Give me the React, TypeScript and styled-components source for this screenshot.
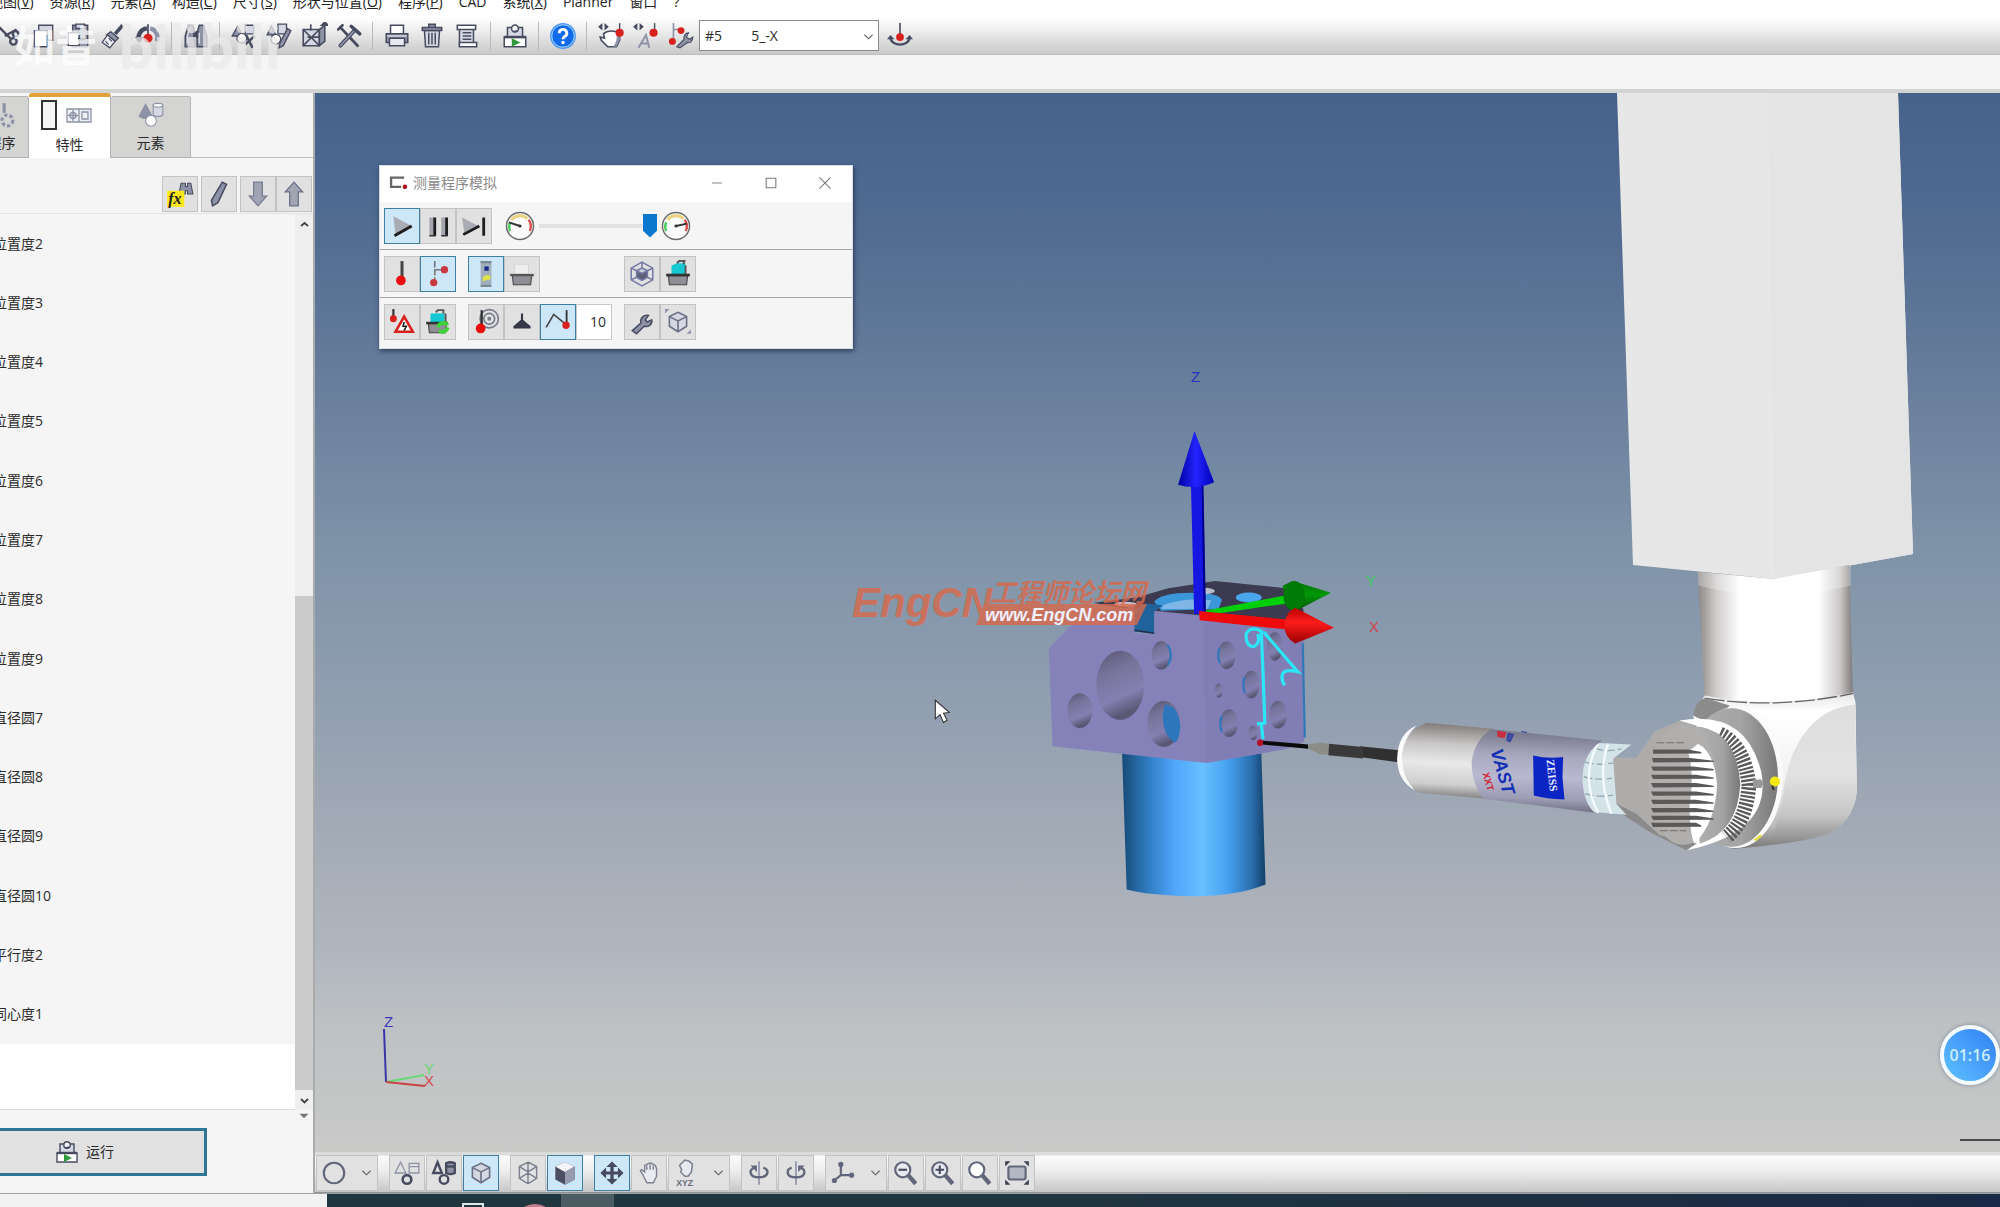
import React from "react";
import styled, { createGlobalStyle, css } from "styled-components";

const INK = "#474b60";
const MID = "#8d92a6";
const LIGHT = "#d5d8e2";
const RED = "#d8201c";

const GlobalStyle = createGlobalStyle`
  * { box-sizing: border-box; }
  body {
    margin: 0;
    overflow: hidden;
    background: #f5f5f5;
    color: #2b2b2b;
    font-family: "Open Sans", "Noto Sans CJK SC", sans-serif;
    font-size: 14px;
    line-height: 20px;
  }
  button, select, input { font: inherit; color: inherit; }
`;

const Page = styled.div`
  display: flex;
  flex-direction: column;
  height: 100vh;
  overflow: hidden;
`;

/* ---------- header ---------- */

const Header = styled.header`
  position: relative;
  flex: none;
  border-bottom: 4px solid #d2d3d3;
`;

const MenuBar = styled.nav`
  display: flex;
  align-items: flex-end;
  gap: 16px;
  height: 17px;
  margin-left: -11px;
  padding-bottom: 5px;
  background: #fff;
`;

const MenuItem = styled.button`
  flex: none;
  padding: 0;
  border: 0;
  background: none;
  white-space: nowrap;
  color: #222;
`;

const ToolBar = styled.div`
  display: flex;
  align-items: center;
  height: 38px;
  margin-left: -10px;
  background: linear-gradient(#fff, #f1f1f1 30%, #c9c9c9);
  border-bottom: 1px solid #bdbdbd;
`;

const ToolButton = styled.button`
  display: flex;
  flex: none;
  align-items: center;
  justify-content: center;
  width: 35px;
  height: 32px;
  padding: 0;
  border: 0;
  background: none;
`;

const Divider = styled.span`
  flex: none;
  width: 1px;
  height: 28px;
  margin: 0 6px;
  background: #b9b9b9;
`;

const SelectBox = styled.label`
  position: relative;
  flex: none;
  width: 180px;
  margin: 0 3px 0 1px;
`;

const ProbeSelect = styled.select`
  width: 100%;
  height: 31px;
  padding: 0 5px;
  appearance: none;
  border: 1px solid #8a8a8a;
  border-radius: 0;
  background: #fff;
`;

const SelectArrow = styled.span`
  position: absolute;
  top: 9px;
  right: 3px;
  display: flex;
  pointer-events: none;
`;

const SubStrip = styled.div`
  height: 34px;
  background: #f5f5f5;
`;

const Watermark = styled.div`
  position: absolute;
  top: 16px;
  left: 13px;
  display: flex;
  align-items: center;
  gap: 22px;
  color: #fff;
  opacity: 0.75;
  font-size: 42px;
  font-weight: 700;
  line-height: 60px;
  pointer-events: none;
`;

const WatermarkBrand = styled.span`
  color: #ebebeb;
  font-family: Lato, sans-serif;
  font-size: 60px;
  font-weight: 900;
`;

/* ---------- side panel ---------- */

const Main = styled.div`
  display: flex;
  flex: 1;
  min-height: 0;
`;

const SidePanel = styled.aside`
  display: flex;
  flex: none;
  flex-direction: column;
  width: 315px;
  overflow: hidden;
  background: #f5f5f5;
  border-right: 2px solid #a9abad;
`;

const Tabs = styled.div`
  display: flex;
  align-items: flex-end;
  height: 65px;
  margin-left: -25px;
  box-shadow: inset 0 -1px #bfbfbf;
`;

const Tab = styled.button<{ $width: number; $active?: boolean }>`
  display: flex;
  flex: none;
  flex-direction: column;
  align-items: center;
  justify-content: space-between;
  width: ${(p) => p.$width}px;
  height: 62px;
  padding: 2px 0 4px;
  border: 1px solid #b4b4b4;
  border-left: 0;
  border-radius: 3px 3px 0 0;
  background: #d4d4d3;
  ${(p) =>
    p.$active &&
    css`
      height: 65px;
      padding-bottom: 3px;
      border-top: 4px solid #e3a13a;
      border-bottom: 0;
      background: #fff;
    `}
`;

const TabIcons = styled.span<{ $start?: boolean }>`
  display: flex;
  align-items: center;
  justify-content: ${(p) => (p.$start ? "flex-start" : "center")};
  gap: 8px;
  width: ${(p) => (p.$start ? "60px" : "auto")};
  height: 32px;
`;

const PanelTools = styled.div`
  display: flex;
  align-items: center;
  justify-content: flex-end;
  gap: 3px;
  height: 56px;
  padding: 16px 1px 0 0;
  border-bottom: 1px solid #e2e2e2;
`;

const Pair = styled.div<{ $spaced?: boolean }>`
  display: flex;
  gap: ${(p) => (p.$spaced ? "1px" : "0")};
`;

const PushButton = styled.button<{ $active?: boolean; $wide?: boolean }>`
  display: flex;
  flex: none;
  align-items: center;
  justify-content: ${(p) => (p.$wide ? "space-between" : "center")};
  width: ${(p) => (p.$wide ? "62px" : "36px")};
  height: 36px;
  padding: ${(p) => (p.$wide ? "0 3px" : "0")};
  border: 1px solid ${(p) => (p.$active ? "#3f7fa6" : "#c3c3c3")};
  background: ${(p) => (p.$active ? "#cde6f8" : "#e1e1e1")};
`;

const ListArea = styled.div`
  display: flex;
  flex: 1;
  min-height: 0;
`;

const ListColumn = styled.div`
  display: flex;
  flex: 1;
  flex-direction: column;
  border-bottom: 1px solid #dcdcdc;
`;

const FeatureList = styled.ul`
  display: flex;
  flex: 1;
  flex-direction: column;
  margin: 0 0 0 -7px;
  padding: 0;
  list-style: none;
`;

const FeatureRow = styled.li`
  display: flex;
  flex: 1;
  align-items: center;
`;

const EmptyRows = styled.div`
  height: 65px;
  background: #fff;
`;

const ScrollTrack = styled.div`
  display: flex;
  flex-direction: column;
  align-items: center;
  width: 18px;
  background: #efefef;
`;

const ScrollButton = styled.button`
  display: flex;
  align-items: center;
  justify-content: center;
  width: 18px;
  height: 20px;
  padding: 0;
  border: 0;
  background: none;
`;

const ScrollGap = styled.div`
  flex: 362;
`;

const ScrollThumb = styled.div`
  flex: 493;
  width: 18px;
  background: #cbcbcb;
`;

const PanelFooter = styled.div`
  display: flex;
  align-items: flex-start;
  justify-content: space-between;
  height: 83px;
  margin-left: -39px;
`;

const RunButton = styled.button`
  display: flex;
  align-items: center;
  justify-content: center;
  gap: 6px;
  width: 246px;
  height: 48px;
  margin-top: 18px;
  border: 3px solid #2f7595;
  background: #e1e1e1;
`;

const MoreArrow = styled.span`
  display: flex;
  width: 18px;
  padding: 0 0 0 3px;
`;

/* ---------- 3D view ---------- */

const ViewColumn = styled.section`
  display: flex;
  flex: 1;
  flex-direction: column;
  min-width: 0;
`;

const Viewport = styled.div`
  position: relative;
  flex: 1;
  overflow: hidden;
  background: linear-gradient(
    #45628b 0%,
    #536d92 14%,
    #6a809d 29%,
    #8094a9 44%,
    #909eb0 57%,
    #a3abb6 70%,
    #b0b6bf 81%,
    #bdc1c3 88%,
    #c9cac8 100%
  );
`;

const SceneSvg = styled.svg`
  position: absolute;
  inset: 0;
  width: 100%;
  height: 100%;
`;

const Timer = styled.div`
  position: absolute;
  right: 0;
  bottom: 67px;
  display: flex;
  align-items: center;
  justify-content: center;
  width: 60px;
  height: 60px;
  border: 4px solid #f4fbff;
  border-radius: 50%;
  background: linear-gradient(225deg, #2d7ff0, #4aa0fa 50%, #5cc2ff);
  box-shadow: 0 0 4px rgba(60, 80, 110, 0.5);
  color: #c9efff;
  font-size: 16px;
  font-weight: 600;
`;

const Dialog = styled.div`
  position: absolute;
  top: 72px;
  left: 64px;
  width: 474px;
  border: 1px solid #d8dde3;
  background: #f5f5f5;
  box-shadow: 1px 2px 5px rgba(20, 35, 60, 0.7);
`;

const TitleBar = styled.div`
  display: flex;
  align-items: center;
  height: 36px;
  padding: 0 0 2px 8px;
  gap: 5px;
  background: #fff;
  color: #8a8a8a;
`;

const DialogTitle = styled.span`
  flex: 1;
`;

const WindowControls = styled.div`
  display: flex;
`;

const WindowButton = styled.button`
  display: flex;
  align-items: center;
  justify-content: center;
  width: 54px;
  height: 34px;
  padding: 0;
  border: 0;
  background: none;
`;

const DialogRow = styled.div<{ $last?: boolean }>`
  display: flex;
  align-items: center;
  gap: 12px;
  height: ${(p) => (p.$last ? "50px" : "48px")};
  padding-left: 4px;
  padding-bottom: ${(p) => (p.$last ? "3px" : "0")};
  border-bottom: ${(p) => (p.$last ? "0" : "1px solid #a8a8a8")};
`;

const Spacer = styled.span`
  width: 60px;
`;

const SpeedControl = styled.label`
  display: flex;
  align-items: center;
  gap: 3px;
`;

const SpeedSlider = styled.input`
  width: 118px;
  height: 24px;
  margin: 0;
  appearance: none;
  background: linear-gradient(#e2e2e2, #e2e2e2) center / 100% 4px no-repeat;
  &::-webkit-slider-thumb {
    appearance: none;
    width: 14px;
    height: 24px;
    background: #0b78d0;
    clip-path: polygon(0 0, 100% 0, 100% 72%, 50% 100%, 0 72%);
  }
`;

const StepInput = styled.input`
  width: 36px;
  height: 36px;
  padding: 0 5px 0 0;
  border: 1px solid #c8c8c8;
  background: #fff;
  text-align: right;
`;

const ViewBar = styled.div`
  display: flex;
  align-items: center;
  gap: 11px;
  height: 41px;
  padding: 2px 0 1px 1px;
  background: linear-gradient(#dadcda 3px, #fbfbfb 4px, #ececec 50%, #c6c6c6);
  border-bottom: 1px solid #8e9496;
`;

const TaskBar = styled.footer`
  display: flex;
  flex: none;
  height: 14px;
  border-top: 1px solid #9aa0a3;
  background: linear-gradient(90deg, #20373f, #20363f 50%, #192a46);
  overflow: hidden;
`;

const TaskSearch = styled.div`
  flex: none;
  width: 327px;
  margin-right: 135px;
  background: #f2f2f2;
`;

const TaskApp = styled.div`
  flex: none;
  width: 53px;
  margin-left: 15px;
  background: #4b5d63;
`;

/* ---------- icons ---------- */

const gauge = (
  <g fill="none">
    <circle cx="12" cy="12" r="11" fill="#fafafa" stroke="#6b6b6b" strokeWidth="1.2" />
    <path d="M4 16a9 9 0 0 1 0-7" stroke="#4bcb62" strokeWidth="2" />
    <path d="M5 7a9 9 0 0 1 13-1" stroke="#ead37c" strokeWidth="2.4" />
    <path d="M19 7a9 9 0 0 1 1 9" stroke="#e05050" strokeWidth="2" />
    <circle cx="12" cy="12" r="1.3" fill="#333" />
  </g>
);

const glass = (fill: string) => (
  <g>
    <path d="M14 14l7 8" stroke="#62667a" strokeWidth="4" />
    <circle cx="9" cy="9" r="7" fill={fill} stroke="#62667a" strokeWidth="2" />
  </g>
);

const paths: Record<string, React.ReactNode> = {
  cut: (
    <g fill="none" stroke={INK} strokeWidth="2.2">
      <path d="M3 3l12 12M20 6L9 12" />
      <circle cx="17" cy="17" r="3" />
      <circle cx="19" cy="10" r="2.5" />
    </g>
  ),
  copy: (
    <g stroke={INK} strokeWidth="1.3">
      <path d="M8 2h13v14H8z" fill={LIGHT} />
      <path d="M4 7h12v15H4z" fill="#fff" />
    </g>
  ),
  paste: (
    <g stroke={INK} strokeWidth="1.3">
      <path d="M7 2h14v20H7z" fill={MID} />
      <path d="M10 1h8v4h-8z" fill={LIGHT} />
      <path d="M3 9h10v12H3z" fill="#fff" />
      <path d="M12 15h7" stroke="#222" strokeWidth="2" />
    </g>
  ),
  brush: (
    <g stroke={INK} strokeWidth="1.2">
      <path d="M21 2l-7 8" strokeWidth="3.4" />
      <path d="M10 8l7 6-3 3-8-6z" fill={MID} />
      <path d="M7 11l7 6-5 6-7-5z" fill="#eceef5" />
      <path d="M5 17l3 3M8 14l3 3" />
    </g>
  ),
  qualify: (
    <g fill="none">
      <path d="M4 17A8.5 8.5 0 0 1 11 5" stroke={INK} strokeWidth="4" />
      <path d="M14 5a8.5 8.5 0 0 1 6 12" stroke={MID} strokeWidth="4" />
      <path d="M12 1v12" stroke={INK} strokeWidth="1.6" />
      <path d="M0 13h8l-4 6z" fill={INK} />
      <circle cx="12" cy="14" r="4.2" fill={RED} />
    </g>
  ),
  binoculars: (
    <g fill={MID} stroke={INK} strokeWidth="1.4">
      <path d="M5 2h4l2 7v13H2V12zM15 2h4l3 10v10h-9V9z" />
      <path d="M10 8h4v5h-4z" fill={INK} />
      <path d="M4 19V12l2-7M15 19V9" stroke={LIGHT} />
    </g>
  ),
  shapesCut: (
    <g stroke={INK} strokeWidth="1.2">
      <path d="M6 3l5 9H1z" fill={MID} />
      <path d="M13 2h8v8h-8z" fill={LIGHT} />
      <circle cx="10" cy="14" r="4.5" fill="#fff" />
      <path d="M14 11l6 12M22 12l-9 8" strokeWidth="2.2" fill="none" />
    </g>
  ),
  shapesEdit: (
    <g stroke={INK} strokeWidth="1.2">
      <path d="M5 3l4 8H1z" fill={MID} />
      <path d="M11 1h8v9h-8z" fill={LIGHT} />
      <circle cx="9" cy="15" r="4.5" fill="#fff" />
      <path d="M20 5l3 2-7 14-4 2 1-5z" fill={MID} />
    </g>
  ),
  frameCut: (
    <g stroke={INK} strokeWidth="1.5" fill="none">
      <path d="M2 6h15v15H2z" fill={LIGHT} />
      <path d="M2 6l15 15M17 6L2 21M9 1v6M6 13h12" />
      <path d="M17 6l5-4v15l-5 4z" fill={MID} />
      <path d="M19 2l3-3 3 3z" fill={INK} />
    </g>
  ),
  tools: (
    <g fill="none" stroke={INK} strokeLinecap="round">
      <path d="M4 4l16 17" strokeWidth="2.6" />
      <path d="M17 7L4 21" strokeWidth="3.6" />
      <path d="M17 7L4 21" stroke={MID} strokeWidth="1.6" />
      <path d="M14 3l8 7" strokeWidth="3.2" />
      <path d="M2 6l4-4" strokeWidth="2.4" />
    </g>
  ),
  printer: (
    <g stroke={INK} strokeWidth="1.4">
      <path d="M6 2h12v8H6z" fill="#fff" />
      <path d="M2 10h20v8H2z" fill={MID} />
      <path d="M5 14h14v7H5z" fill="#e8eaf0" />
      <path d="M3 12h18" stroke={LIGHT} />
    </g>
  ),
  trash: (
    <g stroke={INK} strokeWidth="1.4">
      <path d="M5 7h14l-1 15H6z" fill={LIGHT} />
      <path d="M3 4h18v3H3zM9 1h6v3H9z" fill={MID} />
      <path d="M9 9v11M12 9v11M15 9v11" />
    </g>
  ),
  scroll: (
    <g stroke={INK} strokeWidth="1.4">
      <path d="M5 4h13v17H5z" fill={LIGHT} />
      <path d="M3 2h17v4H3zM5 18h16v4H5z" fill="#fff" />
      <path d="M8 9h8M8 12h8M8 15h8" />
    </g>
  ),
  run: (
    <g stroke={INK} strokeWidth="1.4">
      <path d="M5 4h14v9H5z" fill={LIGHT} />
      <circle cx="12" cy="5" r="3.2" fill="#f2f2f2" />
      <path d="M10 8l5-1" />
      <path d="M2 13h20v9H2z" fill="#fff" />
      <path d="M2 13h20" strokeWidth="2.4" />
      <path d="M9 14l8 4-8 4z" fill="#2f9a3b" stroke="none" />
    </g>
  ),
  help: (
    <g>
      <circle cx="12" cy="12" r="12" fill="#4a9af5" />
      <circle cx="12" cy="12" r="10.4" fill="#0f6bea" stroke="#bcdcff" strokeWidth="0.8" />
      <path d="M8.5 9.5a3.5 3.5 0 1 1 5 3c-1.2.7-1.5 1.2-1.5 2.5" fill="none" stroke="#fff" strokeWidth="2.6" />
      <circle cx="12" cy="18" r="1.6" fill="#fff" />
    </g>
  ),
  handProbe: (
    <g>
      <path d="M0 3.5l4-3.5v7zM10 3.5L6 0v7z" fill={INK} />
      <path d="M20 0v8" stroke={INK} strokeWidth="1.3" />
      <path d="M5 10c3-3 8-3 12-2l3 3v5l-3 6H9l-6-6-1-3 4 1z" fill="#fff" stroke={INK} strokeWidth="1.5" />
      <path d="M17 9l3 3v4l-3 6h-3c3-4 4-8 3-13z" fill={MID} />
      <circle cx="20" cy="9" r="3.8" fill={RED} />
    </g>
  ),
  autoProbe: (
    <g>
      <path d="M0 3.500l4-3.500v7zM10 3.500L6 0v7z" fill={INK} />
      <path d="M20 0v8" stroke={INK} strokeWidth="1.3" />
      <circle cx="19" cy="9" r="3.8" fill={RED} />
      <path d="M5 23l7-12 3 12M8 19h6" fill="none" stroke={MID} strokeWidth="1.8" />
    </g>
  ),
  stylusTool: (
    <g>
      <path d="M5 0v16M5 6h7" stroke={MID} strokeWidth="1.5" />
      <circle cx="12" cy="7" r="3.2" fill={RED} />
      <circle cx="4" cy="17" r="3.2" fill={RED} />
      <path d="M8 22l7-7c-1-3 1-6 4-6l-2 4 3 2 3-2c0 4-3 6-5 5l-7 5z" fill={MID} stroke={INK} strokeWidth="1" />
    </g>
  ),
  anchor: (
    <g fill="none">
      <path d="M12 0v12" stroke={INK} strokeWidth="1.5" />
      <path d="M3 14c2 8 16 8 18 0" stroke={INK} strokeWidth="2.2" />
      <path d="M0 15l3-4 4 4zM17 15l4-4 3 4z" fill={INK} />
      <circle cx="12" cy="13" r="3.6" fill={RED} />
    </g>
  ),
  chevron: <path d="M5 9l7 7 7-7" fill="none" stroke="#666" strokeWidth="2" />,
  chevronUp: <path d="M5 15l7-6 7 6" fill="none" stroke="#444" strokeWidth="3.6" />,
  chevronDown: <path d="M5 9l7 7 7-7" fill="none" stroke="#444" strokeWidth="3.6" />,
  triangle: <path d="M2 7h20l-10 10z" fill="#777" />,
  shapes: (
    <g stroke={MID} strokeWidth="1">
      <path d="M7 2l6 11c-3 3-9 3-12 0z" fill={MID} />
      <path d="M14 3v9c2 2 7 2 9 0V3z" fill={LIGHT} />
      <ellipse cx="18.5" cy="3" rx="4.5" ry="1.8" fill="#fff" />
      <circle cx="12" cy="17.5" r="5" fill="#fff" />
    </g>
  ),
  shapesOutline: (
    <g stroke={MID} strokeWidth="1.2" fill="none">
      <path d="M6 2l5 10H1zM14 3h9v9h-9zM14 6h9" />
      <circle cx="12" cy="18" r="4" stroke={INK} strokeWidth="2.4" />
    </g>
  ),
  shapesBold: (
    <g stroke={INK} strokeWidth="2.2" fill="none">
      <path d="M6 2l4 10H2z" />
      <path d="M14 3q4-2 8 0v9q-4 2-8 0z" fill={MID} />
      <path d="M14 6h8" />
      <circle cx="12" cy="18" r="4" />
    </g>
  ),
  gear: (
    <g stroke={MID} fill="none" strokeWidth="3">
      <path d="M14 1v9" />
      <circle cx="17" cy="17" r="5" strokeDasharray="3 2" />
    </g>
  ),
  tolerance: (
    <g stroke={MID} fill="none" strokeWidth="1.3">
      <path d="M0 6h24v13H0zM12 6v13" fill="#eef0f4" />
      <circle cx="6" cy="12.5" r="3" />
      <path d="M1 12.5h10M6 7v11M15 9h6v7h-6z" />
    </g>
  ),
  formula: (
    <g>
      <path d="M13 2h4v3h2V2h3l2 10h-5V9h-2v3h-6z" fill={MID} stroke={INK} />
      <path d="M0 9h16v15H0z" fill="#ffe81a" />
      <text x="1" y="21" fontFamily="Liberation Serif, serif" fontStyle="italic" fontWeight="700" fontSize="15" fill="#222">fx</text>
    </g>
  ),
  pencil: <path d="M15 1l4 2-8 17-5 3-1-5z" fill={MID} stroke={INK} strokeWidth="1.4" />,
  arrowDown: <path d="M8 1h8v13h4l-8 9-8-9h4z" fill="#a0a4b3" stroke="#777c90" strokeWidth="1.2" />,
  arrowUp: <path d="M8 23h8V10h4L12 1 4 10h4z" fill="#a0a4b3" stroke="#6b7086" strokeWidth="1.2" />,
  app: (
    <g fill="none">
      <path d="M20 5H3v12h13" stroke="#666" strokeWidth="3" />
      <circle cx="21" cy="17" r="3" fill="#b0121c" />
    </g>
  ),
  minimize: <path d="M5 12h14" stroke="#888" strokeWidth="1.5" />,
  maximize: <path d="M5 5h14v14H5z" fill="none" stroke="#777" strokeWidth="1.5" />,
  close: <path d="M4 4l16 16M20 4L4 20" stroke="#777" strokeWidth="1.5" />,
  play: (
    <g>
      <path d="M4 3l17 9-15 8z" fill="#a9acb4" />
      <path d="M21 12L5 21" stroke="#1e1e1e" strokeWidth="2.8" />
    </g>
  ),
  pause: (
    <g>
      <path d="M4 4h5v17H4zM15 4h5v17h-5z" fill="#a3a6ae" />
      <path d="M9 4v17M20 4v17" stroke="#1e1e1e" strokeWidth="2.6" />
      <path d="M4 21h6M15 21h6" stroke="#333" strokeWidth="1.4" />
    </g>
  ),
  skip: (
    <g>
      <path d="M1 4l15 8-13 7z" fill="#a9acb4" />
      <path d="M17 12L2 20M21 4v17" stroke="#1e1e1e" strokeWidth="2.6" />
    </g>
  ),
  gaugeLow: (
    <g>
      {gauge}
      <path d="M12 12L3 9" stroke="#333" strokeWidth="1.5" />
    </g>
  ),
  gaugeHigh: (
    <g>
      {gauge}
      <path d="M12 12l9-2" stroke="#333" strokeWidth="1.5" />
    </g>
  ),
  probe: (
    <g>
      <path d="M12 0v15" stroke="#444" strokeWidth="2.8" />
      <circle cx="11" cy="18" r="4.5" fill="#e80c0c" />
    </g>
  ),
  probePath: (
    <g>
      <path d="M9 0v17M9 8h8" stroke="#777" strokeWidth="1.5" strokeDasharray="6 1.500" />
      <circle cx="18" cy="8" r="3.4" fill="#c8393f" />
      <circle cx="8" cy="20" r="3.4" fill="#c8393f" />
    </g>
  ),
  machine: (
    <g>
      <path d="M7 0h10v24H7z" fill="#9fb0bc" />
      <path d="M7 1h10M7 23h10" stroke="#7b8994" strokeWidth="2" />
      <path d="M10.500 5h4v4h-4z" fill="#182a86" />
      <path d="M9 15c3-3 5-1 7-2v4c-3 1-4 0-7 2z" fill="#dfe04a" />
    </g>
  ),
  fixtureOff: (
    <g>
      <path d="M5 3h13v9H5z" fill="#eee" stroke="#d6d6d6" />
      <path d="M3 13h18l-1 9H4z" fill="#8e9096" stroke="#444" />
      <path d="M1 13h22" stroke="#555" strokeWidth="2.2" />
    </g>
  ),
  fixture: (
    <g>
      <path d="M6 4l5-2h8v10H6z" fill="#15c9d2" />
      <path d="M11 2l2-2h5l-1 3M19 4v9" stroke="#555" strokeWidth="1.8" fill="none" />
      <path d="M3 13h18l-1 9H4z" fill="#8e9096" stroke="#444" />
      <path d="M1 13h22" stroke="#333" strokeWidth="2.6" />
    </g>
  ),
  fixtureSync: (
    <g>
      <path d="M5 4h13v9H5z" fill="#15c9d2" />
      <path d="M10 3l2-2h5v3M19 4v8" stroke="#555" strokeWidth="1.8" fill="none" />
      <path d="M3 13h17l-1 9H4z" fill="#8e9096" stroke="#444" />
      <path d="M1 13h20" stroke="#333" strokeWidth="2.4" />
      <path d="M12 17a5 5 0 0 1 9-2M21 17a5 5 0 0 1-8 3" fill="none" stroke="#3fd435" strokeWidth="3.4" />
    </g>
  ),
  cubeFrame: (
    <g fill="none" stroke="#7478a4" strokeWidth="1.4">
      <path d="M12 1l10 5.500v11L12 23 2 17.500v-11zM12 1v5M2 6.500L7 9M22 6.500L17 9M2 17.500L7 15M22 17.500L17 15" />
      <path d="M12 6.500l5 2.500v6l-5 3-5-3V9z" fill="#5d6077" />
      <path d="M7 9l5 2.500L17 9l-5-2.500z" fill="#cdd0dd" />
    </g>
  ),
  collision: (
    <g>
      <path d="M4 0v8" stroke="#333" strokeWidth="2" />
      <circle cx="4" cy="9" r="3.2" fill={RED} />
      <path d="M14 7l8 14H6z" fill="#fff" stroke="#d8201c" strokeWidth="2.4" />
      <path d="M14 12l-1 4h3l-2 4" fill="none" stroke="#222" strokeWidth="1.5" />
    </g>
  ),
  target: (
    <g fill="none">
      <circle cx="15" cy="9" r="8.5" stroke="#777c8c" strokeWidth="1.5" />
      <circle cx="15" cy="9" r="5" stroke="#777c8c" strokeWidth="1.5" />
      <circle cx="15" cy="9" r="1.8" fill="#777c8c" />
      <path d="M8 1v16" stroke="#333" strokeWidth="2.2" />
      <circle cx="7" cy="18" r="4.5" fill="#e80c0c" />
    </g>
  ),
  cone: <path d="M11 4h2v6l7 6v2H4v-2l7-6z" fill="#343847" />,
  polyline: (
    <g fill="none">
      <path d="M1 17L8 5l11 9" stroke="#444" strokeWidth="1.5" />
      <path d="M20 1v14" stroke="#333" strokeWidth="1.7" />
      <circle cx="19.5" cy="15" r="3.4" fill={RED} />
    </g>
  ),
  wrench: (
    <path d="M3 20l8-7c-1-5 3-8 7-7l-3 4 2 2 4-2c1 4-3 7-7 6l-7 7z" fill={MID} stroke={INK} strokeWidth="1.4" />
  ),
  cube: (
    <g stroke="#6b7086" strokeWidth="1.5">
      <path d="M12 3l8 4v9l-8 5-8-5V7z" fill={LIGHT} />
      <path d="M4 7l8 4 8-4M12 11v10" fill="none" />
    </g>
  ),
  cubeCorners: (
    <g stroke="#6b7086" strokeWidth="1.5">
      <path d="M12 3l8 4v9l-8 5-8-5V7z" fill={LIGHT} />
      <path d="M4 7l8 4 8-4M12 11v10" fill="none" />
      <path d="M0 4V0h4zM24 19v4h-4z" fill={MID} stroke="none" />
    </g>
  ),
  cubeWire: (
    <g stroke="#7b7f8e" strokeWidth="1.3" fill="none">
      <path d="M12 2l8 4v11l-8 5-8-5V6zM4 6l8 5 8-5M12 2v20M4 17l8-5 8 5" />
    </g>
  ),
  cubeSolid: (
    <g>
      <path d="M12 2l9 4v12l-9 5-9-5V6z" fill="#4b4f61" />
      <path d="M3 6l9-4 9 4-9 5z" fill="#f5f5fa" />
      <path d="M12 11l9-5v12l-9 5z" fill="#979bb0" />
    </g>
  ),
  circle: <circle cx="12" cy="12" r="9.5" fill="none" stroke="#62667a" strokeWidth="2" />,
  move: (
    <path
      d="M12 2l4 4h-3v5h5V8l4 4-4 4v-3h-5v5h3l-4 4-4-4h3v-5H6v3l-4-4 4-4v3h5V6H8z"
      fill={INK}
      stroke={INK}
      strokeWidth="1"
    />
  ),
  hand: (
    <g fill="none" stroke="#7b7f90" strokeWidth="1.3">
      <path d="M6 13l-2-3 1-1 3 2V5l2-1 2-1 2 0 2 1 2 1 1 3v7l-3 6h-6l-3-6z" fill="#e9eaf0" />
      <path d="M10 5v4M13 4v5M16 5v4" />
    </g>
  ),
  handXyz: (
    <g>
      <path d="M8 9l-2-4 2-2 3-3 4 1 3 3-1 7-3 4h-3l-4-4z" fill="#e9eaf0" stroke="#7b7f90" strokeWidth="1.4" />
      <text x="3" y="24" fontFamily="Liberation Sans, sans-serif" fontWeight="700" fontSize="8" fill="#666b7c">XYZ</text>
    </g>
  ),
  rotateL: (
    <g fill="none" stroke="#62667a">
      <path d="M12 1v22" stroke="#8d92a6" strokeWidth="1.5" />
      <path d="M8 7c-6 2-5 9 4 9 9 0 10-7 4-9" strokeWidth="2.3" />
      <path d="M4 5h6v6z" fill="#62667a" stroke="none" />
    </g>
  ),
  rotateR: (
    <g fill="none" stroke="#62667a">
      <path d="M12 1v22" stroke="#8d92a6" strokeWidth="1.5" />
      <path d="M8 7c-6 2-5 9 4 9 9 0 10-7 4-9" strokeWidth="2.3" />
      <path d="M20 5h-6v6z" fill="#62667a" stroke="none" />
    </g>
  ),
  axes: (
    <g stroke="#62667a" strokeWidth="2" fill="#62667a">
      <path d="M10 4v10h10M10 14l-6 5" fill="none" />
      <circle cx="10" cy="4" r="1.4" />
      <circle cx="20" cy="14" r="1.4" />
      <circle cx="4" cy="19" r="1.4" />
    </g>
  ),
  zoomOut: (
    <g>
      {glass("#e8eaf0")}
      <path d="M5 9h8" stroke={INK} strokeWidth="2" />
    </g>
  ),
  zoomIn: (
    <g>
      {glass("#e8eaf0")}
      <path d="M5 9h8M9 5v8" stroke={INK} strokeWidth="2" />
    </g>
  ),
  zoom: glass("#fff"),
  fit: (
    <g>
      <path d="M1 6V1h5zM18 1h5v5zM1 18v5h5zM23 18v5h-5z" fill="#3d4152" />
      <rect x="4" y="6" width="16" height="12" rx="2" fill="#b3b7c4" stroke="#62667a" strokeWidth="2" />
    </g>
  ),
};

const Icon = ({ name, size = 26 }: { name: string; size?: number }) => (
  <svg width={size} height={size} viewBox="-1 -1 26 26" aria-hidden="true">
    {paths[name]}
  </svg>
);

/* ---------- scene ---------- */

const holes: [number, number, number, number][] = [
  [785, 914, 67, 97],
  [672, 985, 35, 49],
  [900, 830, 27, 40],
  [1083, 830, 25, 39],
  [1218, 805, 22, 40],
  [1152, 912, 23, 39],
  [1090, 1020, 25, 39],
  [1227, 996, 25, 39],
  [1061, 929, 11, 20],
  [1157, 1048, 13, 20],
];

const fins = [632, 658, 683, 708, 733, 758, 783, 808, 831, 852];

const Scene = () => (
  <SceneSvg viewBox="315 94 1685 1059" preserveAspectRatio="xMidYMid slice" role="img" aria-label="三维视图">
    <defs>
      <linearGradient id="post">
        <stop offset="0" stopColor="#174a78" />
        <stop offset="0.18" stopColor="#2f7cc0" />
        <stop offset="0.36" stopColor="#4fa4fa" />
        <stop offset="0.56" stopColor="#68c0ff" />
        <stop offset="0.74" stopColor="#46a0ee" />
        <stop offset="0.9" stopColor="#2b70b0" />
        <stop offset="1" stopColor="#133f68" />
      </linearGradient>
      <linearGradient id="hole" x1="0" y1="0" x2="0.3" y2="1">
        <stop offset="0" stopColor="#56536f" />
        <stop offset="0.35" stopColor="#76739a" />
        <stop offset="0.75" stopColor="#8380b2" />
        <stop offset="1" stopColor="#5a5775" />
      </linearGradient>
      <linearGradient id="neck">
        <stop offset="0" stopColor="#8c8785" />
        <stop offset="0.12" stopColor="#cfcccb" />
        <stop offset="0.27" stopColor="#ffffff" />
        <stop offset="0.78" stopColor="#ffffff" />
        <stop offset="0.92" stopColor="#c9c7c6" />
        <stop offset="1" stopColor="#7d7a79" />
      </linearGradient>
      <linearGradient id="elbow" x1="0" y1="0" x2="0" y2="1">
        <stop offset="0" stopColor="#e4e4e4" />
        <stop offset="0.12" stopColor="#ffffff" />
        <stop offset="0.55" stopColor="#f2f2f2" />
        <stop offset="0.85" stopColor="#bcbcbc" />
        <stop offset="1" stopColor="#777777" />
      </linearGradient>
      <linearGradient id="side" x1="0" y1="0" x2="0" y2="1">
        <stop offset="0" stopColor="#dedede" />
        <stop offset="0.5" stopColor="#e2e2e2" />
        <stop offset="0.8" stopColor="#c6c6c6" />
        <stop offset="1" stopColor="#8c8c8c" />
      </linearGradient>
      <linearGradient id="body" x1="0.06" y1="0" x2="0" y2="1">
        <stop offset="0" stopColor="#86817e" />
        <stop offset="0.25" stopColor="#c8c6c6" />
        <stop offset="0.5" stopColor="#e9e9e9" />
        <stop offset="0.78" stopColor="#cecece" />
        <stop offset="1" stopColor="#6f6c6b" />
      </linearGradient>
      <linearGradient id="sleeve" x1="0.06" y1="0" x2="0" y2="1">
        <stop offset="0" stopColor="#77778a" />
        <stop offset="0.3" stopColor="#a8a8bf" />
        <stop offset="0.55" stopColor="#b8b8d0" />
        <stop offset="0.8" stopColor="#9d9db5" />
        <stop offset="1" stopColor="#626274" />
      </linearGradient>
      <linearGradient id="drum">
        <stop offset="0" stopColor="#b1b1b1" />
        <stop offset="0.6" stopColor="#a4a4a4" />
        <stop offset="1" stopColor="#787878" />
      </linearGradient>
      <linearGradient id="blueCone">
        <stop offset="0" stopColor="#0000a0" />
        <stop offset="0.5" stopColor="#2424ff" />
        <stop offset="1" stopColor="#0000b8" />
      </linearGradient>
      <linearGradient id="redCone" x1="0" y1="0" x2="0" y2="1">
        <stop offset="0" stopColor="#b50000" />
        <stop offset="0.4" stopColor="#ff1c1c" />
        <stop offset="1" stopColor="#990000" />
      </linearGradient>
      <linearGradient id="greenCone" x1="0" y1="0" x2="0" y2="1">
        <stop offset="0" stopColor="#006a00" />
        <stop offset="0.45" stopColor="#009a08" />
        <stop offset="1" stopColor="#005200" />
      </linearGradient>
    </defs>

    {/* ram */}
    <path d="M1617 94H1898L1913 555 1775 580 1633 566z" fill="#e7e7e7" />
    <path d="M1768 94H1898L1913 555 1775 580z" fill="#e4e4e4" />

    {/* wrist and probe head */}
    <g transform="translate(1360 540) scale(0.333)">
      <path d="M1014 98L1243 120 1470 78 1480 470Q1250 515 1035 480z" fill="url(#neck)" />
      <path d="M1016 140Q1240 200 1474 140V78L1243 120 1014 98z" fill="#ffffff" opacity="0.25" />
      <path d="M1035 470Q1250 512 1480 460L1488 490 1492 760Q1480 855 1400 888 1300 918 1120 930L1000 530z" fill="url(#elbow)" />
      <path d="M1035 478Q1250 512 1480 464" fill="none" stroke="#666" strokeWidth="4" strokeDasharray="60 8" />
      <path d="M1487 497Q1390 505 1330 590 1275 670 1270 790L1235 912Q1300 905 1400 885 1480 855 1492 760z" fill="url(#side)" />
      <path d="M1000 530Q1010 480 1040 478L1110 500 1060 560z" fill="#8b8b8b" />
      <ellipse cx="1128" cy="716" rx="142" ry="212" fill="#fafafa" />
      <ellipse cx="1115" cy="716" rx="140" ry="208" fill="url(#drum)" />
      <path d="M960 545Q1160 510 1205 700 1240 880 980 935L1000 900 1140 740z" fill="#ffffff" />
      <path d="M1080 585Q1155 620 1168 740 1160 850 1100 895" fill="none" stroke="#5a5a5a" strokeWidth="44" strokeDasharray="7 5" />
      <path d="M1005 562Q1130 570 1142 735 1135 880 1020 915z" fill="url(#drum)" />
      <path d="M755 655L830 658 885 577 960 545 1010 560V915L980 935 870 880 790 828 760 790z" fill="#adacab" />
      <path d="M760 790L790 828 870 880 980 935 1010 915 900 890 830 825z" fill="#8a8a8a" />
      <ellipse cx="970" cy="738" rx="104" ry="180" fill="#b0afae" />
      <path d="M1015 615Q1065 640 1072 738 1068 850 1005 915 990 890 990 800 1005 700 985 640z" fill="#fff" />
      {fins.map((y, i) => (
        <path
          key={y}
          d={`M${880 - Math.min(i, 2) * 3} ${y}L${985 + Math.min(i, 3) * 8} ${y}L${i > 0 && i < 9 ? 1062 : 1025} ${y + 8}V${y + 12}L880 ${y + 13}z`}
          fill="#5a5958"
        />
      ))}
      <path d="M890 612h90M900 876h80" stroke="#6e6d6c" strokeWidth="3" strokeDasharray="24 6" />
      <path d="M1180 722h25q10 12 0 26h-25z" fill="#999" />
      <circle cx="1246" cy="728" r="15" fill="#f2ea10" />
      <path d="M1238 740l4 14" stroke="#333" strokeWidth="6" />
      <path d="M1185 905l20-15" stroke="#e4dc30" strokeWidth="7" />

      <path d="M700 612L815 617 760 660 770 795 800 828 700 820Q660 790 668 700 672 640 700 612z" fill="#d3e3e8" />
      <path d="M705 628q35 14 80 2M676 670q40 12 84 2M672 714q40 12 84 4M676 765q40 12 84 4" fill="none" stroke="#92a7ad" strokeWidth="4" strokeDasharray="26 9" />
      <path d="M745 615Q710 715 755 825M715 612Q660 715 715 822" fill="none" stroke="#f5fbfd" strokeWidth="7" />
      <path d="M0 622L125 635V672L0 655z" fill="#303030" />
      <path d="M200 552L400 570 380 780 180 762Q112 730 112 660 120 585 200 552z" fill="url(#body)" />
      <path d="M170 560Q112 585 112 660 112 725 165 755 125 715 126 655 128 600 170 560z" fill="#fbfbfb" />
      <path d="M395 571L728 605Q672 640 668 710 668 790 705 822L370 780Q335 735 335 670 345 600 395 571z" fill="url(#sleeve)" />
      <path d="M520 650Q560 660 610 655L608 715 614 782Q560 780 522 770z" fill="#0b24c4" />
      <text transform="translate(560 663) rotate(84)" fontFamily="Liberation Serif, serif" fontWeight="700" fontSize="34" fill="#e4e8ff">ZEISS</text>
      <text transform="translate(392 636) rotate(74)" fontFamily="Liberation Sans, sans-serif" fontWeight="700" fontStyle="italic" fontSize="54" fill="#1230b4">VAST</text>
      <text transform="translate(368 704) rotate(74)" fontFamily="Liberation Sans, sans-serif" fontWeight="700" fontSize="29" fill="#d6202c">XXT</text>
      <path d="M412 576l28 4-6 18-22-4z" fill="#c83040" />
      <path d="M445 584l16 3-10 22-10-4zM485 578l16 3" fill="#4450a4" stroke="#26389c" strokeWidth="3" />
    </g>

    {/* workpiece */}
    <g transform="translate(840 360) scale(0.357)">
      <path d="M790 1100L1180 1095 1192 1472Q1110 1505 990 1505 860 1502 803 1486z" fill="url(#post)" />
      <path d="M710 683L830 668 920 642 1050 622 1250 642 1298 700V790L1005 725 880 715z" fill="#3b3a50" />
      <path d="M880 680Q900 655 985 655 1060 655 1070 675L1060 700 900 705z" fill="#3c96da" />
      <path d="M905 690Q960 668 1040 676L1030 700H900z" fill="#7eb6e8" />
      <ellipse cx="1145" cy="668" rx="36" ry="14" fill="#4aa6ec" />
      <ellipse cx="1020" cy="650" rx="30" ry="9" fill="#b7bccb" />
      <ellipse cx="800" cy="687" rx="32" ry="7" fill="#c8bcc8" />
      <path d="M585 810L645 748 825 690V768L880 768V705L1005 718 1300 758V1072L1250 1092 1025 1132 595 1085z" fill="#8582ba" />
      <path d="M880 705L1005 718 1300 758V1072L1250 1092 1025 1132 1018 720z" fill="#817eb6" />
      <path d="M825 700L855 685 905 690 880 707V768L825 764z" fill="#20639c" />
      <path d="M825 760L880 768" stroke="#203048" strokeWidth="4" />
      <path d="M1296 796L1302 1060" stroke="#2f78b8" strokeWidth="6" />
      {holes.map(([cx, cy, rx, ry]) => (
        <ellipse key={`${cx}-${cy}`} cx={cx} cy={cy} rx={rx} ry={ry} fill="url(#hole)" />
      ))}
      <ellipse cx="907" cy="1022" rx="46" ry="65" fill="url(#hole)" />
      <path d="M910 968Q950 970 953 1030 950 1070 938 1075 900 1050 905 990z" fill="#2e76bc" />
      <path d="M917 800Q936 828 918 858M1064 808Q1054 830 1064 852M1134 890Q1126 912 1134 936M1070 1000Q1060 1020 1070 1044" fill="none" stroke="#2e76bc" strokeWidth="6" />

      <path d="M1005 708L1270 658V682L1010 720z" fill="#02cf0a" />
      <path d="M1240 635L1268 622 1375 655 1278 705 1255 700z" fill="url(#greenCone)" />
      <ellipse cx="1272" cy="663" rx="30" ry="41" fill="#007a06" />
      <path d="M983 350H1017L1024 712 992 715z" fill="#1616e2" />
      <path d="M1013 350H1018L1025 712H1018z" fill="#00008a" />
      <path d="M993 202L1048 345Q998 368 947 352z" fill="url(#blueCone)" />
      <path d="M1005 706L1255 730V758L1008 732z" fill="#ee0a0a" />
      <path d="M1275 697L1384 753 1275 797Q1245 780 1244 745 1248 710 1275 697z" fill="url(#redCone)" />

      <path d="M1185 765Q1150 745 1138 770 1135 805 1160 806 1178 795 1170 770M1180 765L1185 880 1190 1020 1168 1022M1180 1022L1185 1065M1187 765L1282 876Q1240 865 1238 890 1238 905 1246 914" fill="none" stroke="#2be6f6" strokeWidth="9" />
      <circle cx="1177" cy="1075" r="9" fill="#b3102a" />
      <path d="M1185 1069L1312 1080V1092L1185 1080z" fill="#0a0a0a" />
      <path d="M1310 1080L1350 1074 1375 1080V1108L1345 1108 1312 1092z" fill="#8d8d88" />
      <path d="M1370 1078L1465 1087V1119L1368 1110z" fill="#3a3a3a" />
      <path d="M267 956V1008L280 996 290 1018 300 1012 290 992 306 990z" fill="#fff" stroke="#333" strokeWidth="3" />
    </g>

    {/* axis labels */}
    <g fontFamily="Liberation Sans, sans-serif" fontSize="15">
      <text x="1191" y="383" fill="#2330c0">Z</text>
      <text x="1366" y="587" fill="#3ecb5c">Y</text>
      <text x="1369" y="633" fill="#d2434c">X</text>
      <text x="384" y="1028" fill="#3a36bc">Z</text>
      <text x="424" y="1075" fill="#66d878">Y</text>
      <text x="424" y="1087" fill="#d24c4c">X</text>
    </g>
    <path d="M384 1030L386 1083" stroke="#3a36a8" strokeWidth="2" />
    <path d="M386 1083L424 1076" stroke="#66d878" strokeWidth="2" />
    <path d="M386 1083L425 1087" stroke="#c84444" strokeWidth="2" />
    <path d="M1960 1141H2000" stroke="#4a4a4a" strokeWidth="2" />

    {/* forum logo */}
    <g fill="#d9694a" opacity="0.8" fontWeight="700" fontStyle="italic">
      <path d="M984 605H1147L1137 626H976z" />
      <text x="852" y="618" fontFamily="'Liberation Sans Narrow', 'Liberation Sans', sans-serif" fontSize="50" fontWeight="700">
        <tspan fontSize="42">EngCN</tspan>
      </text>
      <text x="990" y="603" fontFamily="Noto Sans CJK SC, sans-serif" fontSize="26">工程师论坛网</text>
    </g>
    <text x="985" y="622" fontFamily="Liberation Sans, sans-serif" fontWeight="700" fontStyle="italic" fontSize="18" fill="#eef0ff">
      www.EngCN.com
    </text>
  </SceneSvg>
);

/* ---------- data ---------- */

const menus: [string, string?][] = [
  ["视图", "V"],
  ["资源", "R"],
  ["元素", "A"],
  ["构造", "C"],
  ["尺寸", "S"],
  ["形状与位置", "O"],
  ["程序", "P"],
  ["CAD"],
  ["系统", "X"],
  ["Planner"],
  ["窗口"],
  ["?"],
];

const toolGroups: [string, string][][] = [
  [["cut", "剪切"], ["copy", "复制"], ["paste", "粘贴"], ["brush", "格式刷"], ["qualify", "校准"]],
  [["binoculars", "查找"]],
  [["shapesCut", "剪切元素"], ["shapesEdit", "编辑元素"], ["frameCut", "删除特性"], ["tools", "工具"]],
  [["printer", "打印"], ["trash", "删除"], ["scroll", "报告"]],
  [["run", "运行程序"]],
  [["help", "帮助"]],
  [["handProbe", "手动测头"], ["autoProbe", "自动测头"], ["stylusTool", "探针设置"]],
];

const features = [
  "位置度2", "位置度3", "位置度4", "位置度5", "位置度6", "位置度7", "位置度8", "位置度9",
  "直径圆7", "直径圆8", "直径圆9", "直径圆10", "平行度2", "同心度1",
];

type BarButton = { icon: string; label: string; active?: boolean; wide?: boolean };

const viewGroups: BarButton[][] = [
  [{ icon: "circle", label: "圆", wide: true }],
  [
    { icon: "shapesOutline", label: "隐藏元素" },
    { icon: "shapesBold", label: "显示元素" },
    { icon: "cube", label: "模型", active: true },
  ],
  [
    { icon: "cubeWire", label: "线框" },
    { icon: "cubeSolid", label: "实体", active: true },
  ],
  [
    { icon: "move", label: "移动", active: true },
    { icon: "hand", label: "平移" },
    { icon: "handXyz", label: "旋转", wide: true },
  ],
  [
    { icon: "rotateL", label: "向左旋转" },
    { icon: "rotateR", label: "向右旋转" },
  ],
  [
    { icon: "axes", label: "视图方向", wide: true },
    { icon: "zoomOut", label: "缩小" },
    { icon: "zoomIn", label: "放大" },
    { icon: "zoom", label: "缩放窗口" },
    { icon: "fit", label: "适合窗口" },
  ],
];

const IconButton = ({ icon, label, active, wide }: BarButton) => (
  <PushButton aria-label={label} $active={active} $wide={wide}>
    <Icon name={icon} size={28} />
    {wide && <Icon name="chevron" size={15} />}
  </PushButton>
);

const SimulationDialog = () => (
  <Dialog role="dialog" aria-label="测量程序模拟">
    <TitleBar>
      <Icon name="app" size={20} />
      <DialogTitle>测量程序模拟</DialogTitle>
      <WindowControls>
        <WindowButton aria-label="最小化"><Icon name="minimize" size={18} /></WindowButton>
        <WindowButton aria-label="最大化"><Icon name="maximize" size={18} /></WindowButton>
        <WindowButton aria-label="关闭"><Icon name="close" size={18} /></WindowButton>
      </WindowControls>
    </TitleBar>
    <DialogRow>
      <Pair>
        <IconButton icon="play" label="播放" active />
        <IconButton icon="pause" label="暂停" />
        <IconButton icon="skip" label="单步" />
      </Pair>
      <SpeedControl>
        <Icon name="gaugeLow" size={32} />
        <SpeedSlider type="range" min={0} max={100} defaultValue={100} aria-label="速度" />
        <Icon name="gaugeHigh" size={32} />
      </SpeedControl>
    </DialogRow>
    <DialogRow>
      <Pair>
        <IconButton icon="probe" label="测头" />
        <IconButton icon="probePath" label="路径" active />
      </Pair>
      <Pair>
        <IconButton icon="machine" label="机器" active />
        <IconButton icon="fixtureOff" label="夹具" />
      </Pair>
      <Spacer />
      <Pair>
        <IconButton icon="cubeFrame" label="安全平面" />
        <IconButton icon="fixture" label="工件" />
      </Pair>
    </DialogRow>
    <DialogRow $last>
      <Pair>
        <IconButton icon="collision" label="碰撞检测" />
        <IconButton icon="fixtureSync" label="更新夹具" />
      </Pair>
      <Pair>
        <IconButton icon="target" label="测点" />
        <IconButton icon="cone" label="法向" />
        <IconButton icon="polyline" label="轨迹" active />
        <StepInput defaultValue="10" aria-label="步数" />
      </Pair>
      <Pair>
        <IconButton icon="wrench" label="设置" />
        <IconButton icon="cubeCorners" label="视图范围" />
      </Pair>
    </DialogRow>
  </Dialog>
);

export default function App() {
  return (
    <Page>
      <GlobalStyle />
      <Header>
        <MenuBar>
          {menus.map(([label, key]) => (
            <MenuItem key={label}>
              {label}
              {key && <>(<u>{key}</u>)</>}
            </MenuItem>
          ))}
        </MenuBar>
        <ToolBar>
          {toolGroups.map((group, i) => (
            <React.Fragment key={group[0][0]}>
              {i > 0 && <Divider />}
              {group.map(([icon, label]) => (
                <ToolButton key={icon} aria-label={label}>
                  <Icon name={icon} size={28} />
                </ToolButton>
              ))}
            </React.Fragment>
          ))}
          <SelectBox>
            <ProbeSelect aria-label="探针" defaultValue="5">
              <option value="5">{"#5" + "\u00a0".repeat(8) + "5_-X"}</option>
            </ProbeSelect>
            <SelectArrow><Icon name="chevron" size={15} /></SelectArrow>
          </SelectBox>
          <ToolButton aria-label="测头方向"><Icon name="anchor" size={28} /></ToolButton>
        </ToolBar>
        <SubStrip />
        <Watermark>
          <span>如昔</span>
          <WatermarkBrand>bilibili</WatermarkBrand>
        </Watermark>
      </Header>

      <Main>
        <SidePanel>
          <Tabs role="tablist">
            <Tab role="tab" $width={54}>
              <TabIcons><Icon name="gear" size={28} /></TabIcons>
              程序
            </Tab>
            <Tab role="tab" aria-selected $width={82} $active>
              <TabIcons $start>
                <svg width="18" height="32" aria-hidden="true">
                  <path d="M2 2h14v28H2z" fill="#f5f5f5" stroke="#333" strokeWidth="2" />
                </svg>
                <Icon name="tolerance" size={26} />
              </TabIcons>
              特性
            </Tab>
            <Tab role="tab" $width={80}>
              <TabIcons><Icon name="shapes" size={28} /></TabIcons>
              元素
            </Tab>
          </Tabs>
          <PanelTools>
            <IconButton icon="formula" label="公式查找" />
            <IconButton icon="pencil" label="编辑" />
            <Pair>
              <IconButton icon="arrowDown" label="下移" />
              <IconButton icon="arrowUp" label="上移" />
            </Pair>
          </PanelTools>
          <ListArea>
            <ListColumn>
              <FeatureList>
                {features.map((name) => (
                  <FeatureRow key={name}>{name}</FeatureRow>
                ))}
              </FeatureList>
              <EmptyRows />
            </ListColumn>
            <ScrollTrack>
              <ScrollButton aria-label="向上滚动"><Icon name="chevronUp" size={13} /></ScrollButton>
              <ScrollGap />
              <ScrollThumb />
              <ScrollButton aria-label="向下滚动"><Icon name="chevronDown" size={13} /></ScrollButton>
            </ScrollTrack>
          </ListArea>
          <PanelFooter>
            <RunButton>
              <Icon name="run" size={26} />
              运行
            </RunButton>
            <MoreArrow><Icon name="triangle" size={12} /></MoreArrow>
          </PanelFooter>
        </SidePanel>

        <ViewColumn>
          <Viewport>
            <Scene />
            <SimulationDialog />
            <Timer>01:16</Timer>
          </Viewport>
          <ViewBar>
            {viewGroups.map((group) => (
              <Pair key={group[0].icon} $spaced>
                {group.map((b) => (
                  <IconButton key={b.icon} {...b} />
                ))}
              </Pair>
            ))}
          </ViewBar>
        </ViewColumn>
      </Main>

      <TaskBar>
        <TaskSearch />
        <svg width="84" height="13" aria-hidden="true">
          <path d="M1 13V10H21V13" fill="none" stroke="#dfe6e8" strokeWidth="2" />
          <path d="M62 13q11-6 22 0z" fill="#c2808c" />
        </svg>
        <TaskApp />
      </TaskBar>
    </Page>
  );
}
